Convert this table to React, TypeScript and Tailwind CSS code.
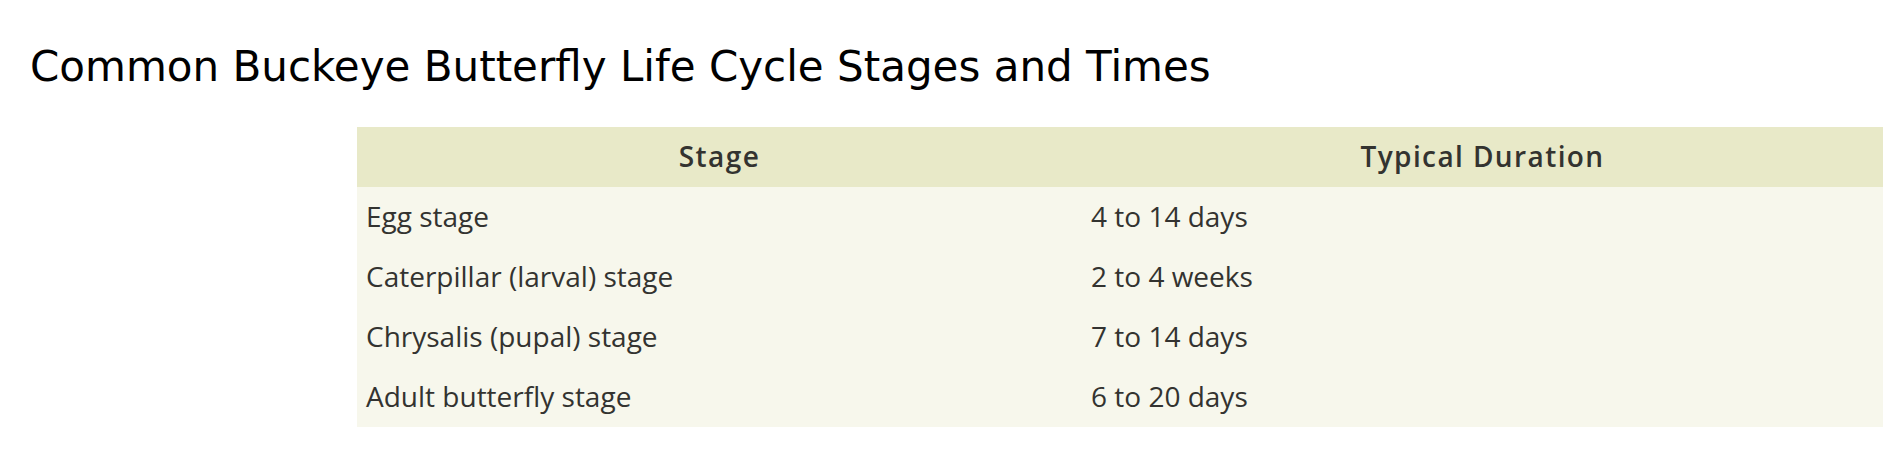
const rows = [
  { stage: 'Egg stage', duration: '4 to 14 days' },
  { stage: 'Caterpillar (larval) stage', duration: '2 to 4 weeks' },
  { stage: 'Chrysalis (pupal) stage', duration: '7 to 14 days' },
  { stage: 'Adult butterfly stage', duration: '6 to 20 days' },
];

export default function App() {
  return (
    <div className="min-h-[463px] bg-white">
      <h1 className="pl-[30px] pt-[46px] text-[42px] leading-[42px] font-normal text-black [font-family:'DejaVu_Sans',sans-serif]">
        Common Buckeye Butterfly Life Cycle Stages and Times
      </h1>

      {/* Stage table */}
      <div className="flex justify-end pr-[21px] pt-[39px]">
        <table className="w-[1526px] table-fixed border-collapse text-[28px] text-[#333330] [font-family:'Open_Sans',sans-serif]">
          <colgroup>
            <col className="w-[725px]" />
            <col />
          </colgroup>
          <thead>
            <tr className="bg-[#e8e9c8] h-[60px]">
              <th className="text-center font-semibold tracking-[1.4px] leading-[56px] px-0 pt-0 pb-[3px]">Stage</th>
              <th className="text-center font-semibold tracking-[1.4px] leading-[56px] px-0 pt-0 pb-[3px]">Typical Duration</th>
            </tr>
          </thead>
          <tbody className="bg-[#f7f7ec]">
            {rows.map((row) => (
              <tr key={row.stage} className="h-[60px]">
                <td className="px-[9px] pt-0 pb-[2px] leading-[56px]">{row.stage}</td>
                <td className="px-[9px] pt-0 pb-[2px] leading-[56px]">{row.duration}</td>
              </tr>
            ))}
          </tbody>
        </table>
      </div>
    </div>
  );
}
